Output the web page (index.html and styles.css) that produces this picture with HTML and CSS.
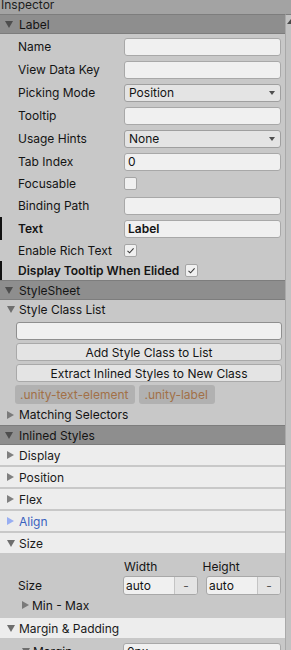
FILE: index.html
```html
<!DOCTYPE html>
<html lang="en">
<head>
    <meta charset="UTF-8">
    <meta name="viewport" content="width=device-width, initial-scale=1.0">
    <title>Inspector</title>
    <link rel="stylesheet" href="styles.css">
</head>
<body>
    <div class="tab">Inspector</div>
    <div class="panel">
        <div class="content">
            <div class="group-head"><span class="tri-down"></span>Label</div>
            <div class="props">
                <div class="row"><span class="lbl">Name</span><span class="field"></span></div>
                <div class="row"><span class="lbl">View Data Key</span><span class="field"></span></div>
                <div class="row"><span class="lbl">Picking Mode</span><span class="field drop">Position<i class="caret"></i></span></div>
                <div class="row"><span class="lbl">Tooltip</span><span class="field"></span></div>
                <div class="row"><span class="lbl">Usage Hints</span><span class="field drop">None<i class="caret"></i></span></div>
                <div class="row"><span class="lbl">Tab Index</span><span class="field">0</span></div>
                <div class="row short"><span class="lbl">Focusable</span><span class="check"></span></div>
                <div class="row"><span class="lbl">Binding Path</span><span class="field"></span></div>
                <div class="row set"><span class="lbl">Text</span><span class="field strong">Label</span></div>
                <div class="row short"><span class="lbl">Enable Rich Text</span><span class="check"><svg width="11" height="11" viewBox="0 0 11 11"><path d="M2.5 5.8 L4.6 7.8 L8.6 3.4" fill="none" stroke="#3a3a3a" stroke-width="1.1"/></svg></span></div>
                <div class="row short last set"><span class="lbl">Display Tooltip When Elided</span><span class="check"><svg width="11" height="11" viewBox="0 0 11 11"><path d="M2.5 5.8 L4.6 7.8 L8.6 3.4" fill="none" stroke="#3a3a3a" stroke-width="1.1"/></svg></span></div>
            </div>

            <div class="group-head"><span class="tri-down"></span>StyleSheet</div>
            <div class="sub-head"><span class="tri-down"></span>Style Class List</div>
            <div class="class-list">
                <span class="field wide"></span>
                <button class="btn">Add Style Class to List</button>
                <button class="btn">Extract Inlined Styles to New Class</button>
                <div class="tags">
                    <span class="tag">.unity-text-element</span>
                    <span class="tag">.unity-label</span>
                </div>
            </div>
            <div class="sub-head match"><span class="tri-right"></span>Matching Selectors</div>

            <div class="group-head"><span class="tri-down"></span>Inlined Styles</div>
            <div class="fold"><span class="tri-right"></span>Display</div>
            <div class="fold"><span class="tri-right"></span>Position</div>
            <div class="fold"><span class="tri-right"></span>Flex</div>
            <div class="fold active"><span class="tri-right"></span>Align</div>
            <div class="fold"><span class="tri-down"></span>Size</div>
            <div class="size-body">
                <div class="size-labels"><span>Width</span><span>Height</span></div>
                <div class="size-row">
                    <span class="lbl">Size</span>
                    <div class="pair">
                        <span class="unit-field"><span class="val">auto</span><span class="unit">-</span></span>
                        <span class="unit-field"><span class="val">auto</span><span class="unit">-</span></span>
                    </div>
                </div>
                <div class="minmax"><span class="tri-right"></span>Min - Max</div>
            </div>
            <div class="fold"><span class="tri-down"></span>Margin &amp; Padding</div>
            <div class="row margin"><span class="lbl"><span class="tri-down"></span>Margin</span><span class="field">0px</span></div>
        </div>
        <div class="scrollbar"><i class="up"></i></div>
    </div>
</body>
</html>
```

FILE: styles.css
```css
* {
    margin: 0;
    padding: 0;
    box-sizing: border-box;
}
body {
    width: 291px;
    height: 650px;
    overflow: hidden;
    background: #c8c8c8;
    font-family: Inter, "Noto Sans", sans-serif;
    font-size: 12px;
    color: #141414;
}
.tab {
    height: 14px;
    line-height: 10px;
    padding-left: 1px;
    background: #a3a3a3;
    color: #1c1c1c;
}
.panel {
    display: flex;
    height: 636px;
}
.content {
    flex: 1;
    overflow: hidden;
}
.scrollbar {
    width: 6px;
    background: #c2c2c2;
    border-left: 1px solid #a9a9a9;
    border-top: 1px solid #7f7f7f;
    padding: 4px 0 0 1px;
}
.scrollbar .up {
    display: block;
    width: 0;
    height: 0;
    border-left: 4px solid transparent;
    border-right: 4px solid transparent;
    border-bottom: 5px solid #4a4a4a;
}

/* triangles */
.tri-down,
.tri-right {
    display: inline-block;
    width: 0;
    height: 0;
    flex-shrink: 0;
}
.tri-down {
    border-left: 4px solid transparent;
    border-right: 4px solid transparent;
    border-top: 7px solid #6e6e6e;
    margin-right: 4px;
}
.tri-right {
    border-top: 4px solid transparent;
    border-bottom: 4px solid transparent;
    border-left: 7px solid #7a7a7a;
    margin-right: 5px;
}

.group-head {
    height: 20px;
    display: flex;
    align-items: center;
    padding-left: 5px;
    background: #8e8e8e;
    border-top: 1px solid #7d7d7d;
    border-bottom: 1px solid #7d7d7d;
    color: #141414;
}
.group-head .tri-down {
    border-top-color: #4e4e4e;
    margin-right: 6px;
}

/* property rows */
.props {
    padding-top: 1px;
}
.row {
    height: 23px;
    display: flex;
    align-items: center;
    padding: 0 4px 0 18px;
    gap: 6px;
}
.row.short {
    height: 21px;
}
.row.short.last {
    height: 19px;
}
.row.set {
    box-shadow: inset 2px 0 0 #111;
    font-weight: 600;
}
.lbl {
    min-width: 100px;
    flex-shrink: 0;
    white-space: nowrap;
    display: flex;
    align-items: center;
}
.field {
    flex: 1;
    height: 18px;
    line-height: 16px;
    padding-left: 3px;
    background: #f0f0f0;
    border: 1px solid #a8a8a8;
    border-radius: 3px;
    font-weight: 400;
    position: relative;
}
.field.strong {
    font-weight: 600;
}
.field.drop {
    background: #e4e4e4;
    border-color: #9f9f9f;
    padding-left: 4px;
}
.caret {
    position: absolute;
    right: 5px;
    top: 6px;
    width: 0;
    height: 0;
    border-left: 3.5px solid transparent;
    border-right: 3.5px solid transparent;
    border-top: 4px solid #4f4f4f;
}
.check {
    width: 13px;
    height: 13px;
    background: #f0f0f0;
    border: 1px solid #a5a5a5;
    border-radius: 2px;
    display: flex;
    align-items: center;
    justify-content: center;
}

/* stylesheet section */
.sub-head {
    height: 19px;
    display: flex;
    align-items: center;
    padding-left: 7px;
}
.sub-head.match {
    height: 21px;
}
.class-list {
    display: flex;
    flex-direction: column;
    padding: 3px 3px 0 16px;
}
.field.wide {
    flex: none;
    border-color: #8f8f8f;
}
.btn {
    margin-top: 3px;
    height: 18px;
    font-family: inherit;
    font-size: 12px;
    color: #141414;
    background: #e4e4e4;
    border: 1px solid #a9a9a9;
    border-radius: 3px;
}
.tags {
    display: flex;
    gap: 4px;
    margin: 3px 0 0 -1px;
}
.tag {
    height: 19px;
    line-height: 19px;
    padding: 0 7px 0 5px;
    background: #b1b1b1;
    border-radius: 3px;
    color: #a27047;
}

/* inlined styles */
.fold {
    height: 20px;
    display: flex;
    align-items: center;
    padding-left: 7px;
    background: #ededed;
    border-bottom: 2px solid #c8c8c8;
    box-sizing: content-box;
    color: #1a1a1a;
}
.fold .tri-right {
    border-left-color: #808080;
}
.fold.active {
    color: #3a62bf;
}
.fold.active .tri-right {
    border-left-color: #98aef2;
}
.size-body {
    padding: 3px 4px 4px 18px;
    margin-top: -2px;
}
.size-labels {
    height: 20px;
    display: flex;
    align-items: center;
    padding-left: 106px;
}
.size-labels span {
    width: 83px;
}
.size-row {
    height: 19px;
    display: flex;
    align-items: center;
}
.size-row .lbl {
    min-width: 105px;
}
.pair {
    flex: 1;
    display: grid;
    grid-template-columns: 1fr 1fr;
    gap: 8px;
}
.unit-field {
    display: flex;
    height: 19px;
    line-height: 17px;
    background: #f0f0f0;
    border: 1px solid #a8a8a8;
    border-radius: 3px;
    overflow: hidden;
}
.unit-field .val {
    flex: 1;
    padding-left: 2px;
}
.unit {
    width: 23px;
    text-align: center;
    background: #e4e4e4;
    border-left: 1px solid #c4c4c4;
    color: #555;
}
.minmax {
    height: 18px;
    display: flex;
    align-items: center;
    padding-left: 4px;
    margin-top: 1px;
}
.minmax .tri-right {
    margin-right: 3px;
}
.row.margin {
    padding-left: 22px;
}
.row.margin .lbl {
    min-width: 95px;
}
.row.margin .tri-down {
    margin-right: 3px;
}
```
